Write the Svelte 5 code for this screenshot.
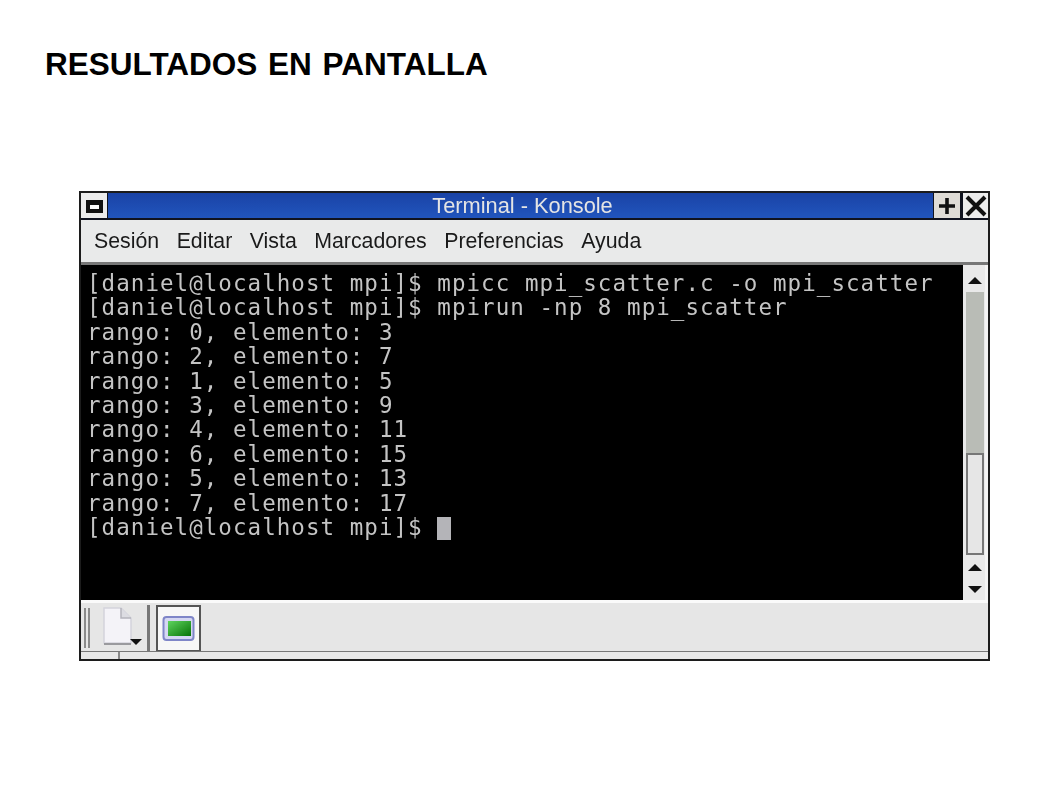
<script>
  const menu = ['Sesión', 'Editar', 'Vista', 'Marcadores', 'Preferencias', 'Ayuda'];
  const lines = [
    '[daniel@localhost mpi]$ mpicc mpi_scatter.c -o mpi_scatter',
    '[daniel@localhost mpi]$ mpirun -np 8 mpi_scatter',
    'rango: 0, elemento: 3',
    'rango: 2, elemento: 7',
    'rango: 1, elemento: 5',
    'rango: 3, elemento: 9',
    'rango: 4, elemento: 11',
    'rango: 6, elemento: 15',
    'rango: 5, elemento: 13',
    'rango: 7, elemento: 17'
  ];
</script>

<div class="slide">
  <h1>RESULTADOS EN PANTALLA</h1>

  <div class="window">
    <div class="titlebar">
      <div class="tb-btn menu-btn"><span class="menu-glyph"></span></div>
      <div class="title">Terminal - Konsole</div>
      <div class="tb-btn plus">
        <svg width="18" height="18" viewBox="0 0 18 18"><path d="M9 1v16M1 9h16" stroke="#111" stroke-width="3.6" /></svg>
      </div>
      <div class="tb-btn close">
        <svg width="22" height="22" viewBox="0 0 22 22"><path d="M2 2l18 18M20 2L2 20" stroke="#111" stroke-width="4" /></svg>
      </div>
    </div>

    <nav class="menubar">
      {#each menu as item}
        <span>{item}</span>
      {/each}
    </nav>

    <div class="main">
      <div class="terminal">
        {#each lines as line}
          <div class="line">{line}</div>
        {/each}
        <div class="line">[daniel@localhost mpi]$ <span class="cursor"></span></div>
      </div>
      <div class="scrollbar">
        <div class="arrow first up"></div>
        <div class="track"></div>
        <div class="thumb"></div>
        <div class="arrow up"></div>
        <div class="arrow down"></div>
      </div>
    </div>

    <div class="toolbar">
      <span class="grip"></span>
      <div class="new-doc">
        <svg width="44" height="42" viewBox="0 0 44 42">
          <path d="M5 2h17l10 10v25H5z" fill="#f4f3f8" stroke="#d4d4dc" stroke-width="1.5" />
          <path d="M22 2v10h10" fill="#dcdce2" stroke="#b4b4bc" stroke-width="1.5" />
          <path d="M5 38h27" stroke="#9a9a9e" stroke-width="2" />
          <path d="M31 33h12l-6 6z" fill="#111" />
        </svg>
      </div>
      <span class="sep"></span>
      <div class="session">
        <svg width="34" height="28" viewBox="0 0 34 28">
          <defs>
            <linearGradient id="screen" x1="0" y1="0" x2="1" y2="1">
              <stop offset="0" stop-color="#5fd45f" />
              <stop offset="1" stop-color="#067306" />
            </linearGradient>
          </defs>
          <rect x="1.5" y="2" width="30" height="23" rx="3" fill="#d5d7f2" stroke="#7f86c8" stroke-width="2" />
          <rect x="6" y="6" width="23" height="15" fill="url(#screen)" />
        </svg>
      </div>
    </div>

    <div class="statusbar">
      <span class="status-cell"></span>
      <span class="status-rest"></span>
    </div>
  </div>
</div>

<style>
  :global(body) {
    background: #fff;
  }
  .slide {
    width: 1058px;
    height: 793px;
    padding: 46px 0 0 45px;
    box-sizing: border-box;
    font-family: "Liberation Sans", Arial, sans-serif;
  }
  h1 {
    margin: 0;
    font-size: 31.5px;
    line-height: 36px;
    font-weight: bold;
    color: #000;
    word-spacing: 2px;
  }
  .window {
    margin: 109px 0 0 34px;
    width: 911px;
    height: 470px;
    box-sizing: border-box;
    border: 2px solid #1c1c1c;
    background: #e6e6e6;
    display: flex;
    flex-direction: column;
    filter: blur(0.6px);
  }
  .titlebar {
    height: 27px;
    flex: none;
    display: flex;
    background: #10131f;
    box-sizing: border-box;
    padding-bottom: 2px;
  }
  .tb-btn {
    width: 26px;
    background: #ececec;
    display: flex;
    align-items: center;
    justify-content: center;
    box-sizing: border-box;
  }
  .menu-btn {
    margin-right: 1px;
    padding-top: 2px;
  }
  .menu-glyph {
    display: block;
    width: 9px;
    height: 4px;
    border: 4px solid #111;
    border-top-width: 5px;
    background: #fff;
  }
  .plus {
    background: #dfdcd6;
    margin-left: 1px;
  }
  .close {
    margin-left: 3px;
    width: 25px;
  }
  .title {
    flex: 1;
    text-align: center;
    color: #e4e4e4;
    font-size: 21.8px;
    line-height: 25px;
    padding-left: 4px;
    background: linear-gradient(#1a43a6, #2155bd);
  }
  .menubar {
    height: 45px;
    flex: none;
    box-sizing: border-box;
    display: flex;
    align-items: center;
    gap: 17.5px;
    padding: 0 13px;
    background: #e9eaea;
    border-bottom: 3px solid #777;
    color: #1a1a1a;
    font-size: 21.3px;
  }
  .main {
    height: 335px;
    flex: none;
    display: flex;
    background: #000;
  }
  .terminal {
    flex: 1;
    padding: 6px 0 0 6px;
    color: #c4c4c4;
    font-family: "DejaVu Sans Mono", monospace;
    font-size: 22.5px;
    line-height: 24.4px;
    letter-spacing: 1.05px;
  }
  .line {
    white-space: pre;
    height: 24.4px;
  }
  .cursor {
    display: inline-block;
    width: 14px;
    height: 23px;
    background: #b4b4b8;
    vertical-align: -5px;
  }
  .scrollbar {
    width: 25px;
    flex: none;
    background: #e9e9e9;
    display: flex;
    flex-direction: column;
    padding: 0 2px 0 4px;
    border-right: 3px solid #f4f4f4;
    box-sizing: border-box;
  }
  .track {
    height: 161px;
    flex: none;
    background: #b9bcb6;
    margin: 0 -1px;
  }
  .thumb {
    height: 102px;
    flex: none;
    box-sizing: border-box;
    border: 2px solid #777;
    background: #e6e6e6;
    margin: 0 -1px;
  }
  .arrow {
    height: 22.5px;
    display: flex;
    align-items: center;
    justify-content: center;
    padding-top: 2px;
    box-sizing: border-box;
  }
  .arrow.first {
    height: 27px;
    padding-top: 4px;
  }
  .arrow.up::before {
    content: "";
    border: 7px solid transparent;
    border-top: 0;
    border-bottom: 7px solid #111;
  }
  .arrow.down::before {
    content: "";
    border: 7px solid transparent;
    border-bottom: 0;
    border-top: 7px solid #111;
  }
  .toolbar {
    height: 51px;
    flex: none;
    box-sizing: border-box;
    display: flex;
    align-items: stretch;
    background: #e6e6e6;
    border-top: 3px solid #fafafa;
    padding: 2px 0 0 3px;
  }
  .grip {
    width: 2px;
    margin: 3px 0 3px;
    border-left: 2px solid #8a8a8a;
    border-right: 2px solid #8a8a8a;
  }
  .new-doc {
    width: 44px;
    margin-left: 9px;
    padding-top: 1px;
  }
  .sep {
    width: 3px;
    margin-left: 4px;
    background: #777;
  }
  .session {
    width: 45px;
    margin-left: 6px;
    box-sizing: border-box;
    border: 2px solid #555;
    border-bottom-width: 1px;
    background: #f7f7f7;
    display: flex;
    align-items: center;
    justify-content: center;
  }
  .statusbar {
    flex: 1;
    display: flex;
    background: #e8e8e8;
    border-top: 1px solid #777;
  }
  .status-cell {
    width: 37px;
    border-right: 2px solid #888;
  }
  .status-rest {
    flex: 1;
  }
</style>
